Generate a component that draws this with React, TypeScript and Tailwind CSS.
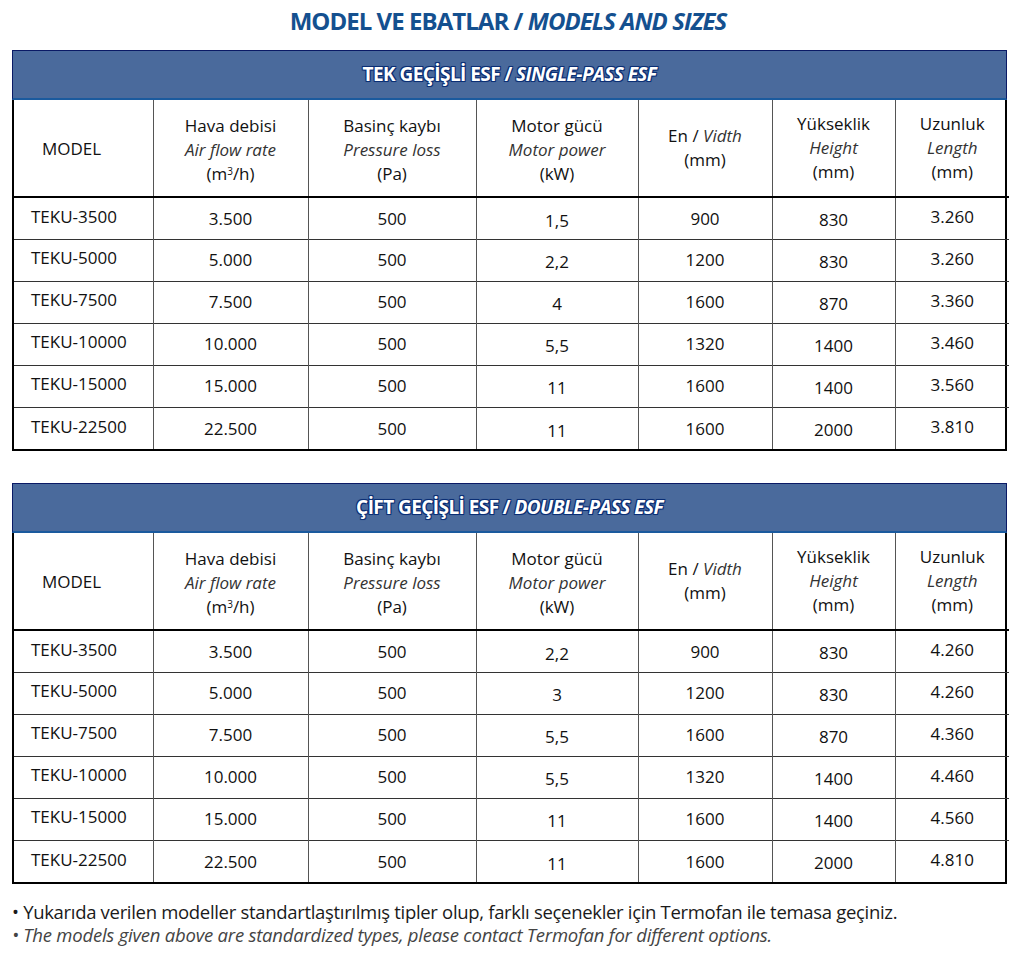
import React from 'react';

type Row = [string, string, string, string, string, string, string];

const singlePass: Row[] = [
  ['TEKU-3500', '3.500', '500', '1,5', '900', '830', '3.260'],
  ['TEKU-5000', '5.000', '500', '2,2', '1200', '830', '3.260'],
  ['TEKU-7500', '7.500', '500', '4', '1600', '870', '3.360'],
  ['TEKU-10000', '10.000', '500', '5,5', '1320', '1400', '3.460'],
  ['TEKU-15000', '15.000', '500', '11', '1600', '1400', '3.560'],
  ['TEKU-22500', '22.500', '500', '11', '1600', '2000', '3.810'],
];

const doublePass: Row[] = [
  ['TEKU-3500', '3.500', '500', '2,2', '900', '830', '4.260'],
  ['TEKU-5000', '5.000', '500', '3', '1200', '830', '4.260'],
  ['TEKU-7500', '7.500', '500', '5,5', '1600', '870', '4.360'],
  ['TEKU-10000', '10.000', '500', '5,5', '1320', '1400', '4.460'],
  ['TEKU-15000', '15.000', '500', '11', '1600', '1400', '4.560'],
  ['TEKU-22500', '22.500', '500', '11', '1600', '2000', '4.810'],
];

const widths = ['w-[139px]', 'w-[155px]', 'w-[168px]', 'w-[162px]', 'w-[134px]', 'w-[123px]', 'w-[114px]'];

function HeaderCell({ tr, en, unit }: { tr: React.ReactNode; en?: string; unit?: React.ReactNode }) {
  return (
    <div className="flex flex-col items-center leading-[24px]">
      <span>{tr}</span>
      {en && <span className="italic text-[#333]">{en}</span>}
      {unit && <span>{unit}</span>}
    </div>
  );
}

function SizeTable({ title, subtitle, rows }: { title: string; subtitle: string; rows: Row[] }) {
  return (
    <div className="w-[995px] border-2 border-black">
      <div className="h-[50px] bg-[#4a6a9c] border-t border-[#0a1a66] border-b-2 border-b-[#1a5a9e] -mx-[2px] -mt-[2px] border-x border-x-[#0a1a66] flex items-center justify-center">
        <span className="text-white font-bold text-[19px] tracking-[-0.03em] [text-shadow:0_0_2px_#0b2f75,1px_1px_0_#0b2f75,-1px_-1px_0_#0b2f75,1px_-1px_0_#0b2f75,-1px_1px_0_#0b2f75]">
          {title} / <span className="italic">{subtitle}</span>
        </span>
      </div>
      <table className="w-full border-collapse table-fixed text-[17px] text-[#111]">
        <colgroup>
          {widths.map((w, i) => (
            <col key={i} className={w} />
          ))}
        </colgroup>
        <thead>
          <tr className="h-[97px] border-b-2 border-black">
            <th className="font-normal text-left pl-[28px] pt-[2px]">MODEL</th>
            <th className="font-normal border-l border-[#555] pt-[4px]">
              <HeaderCell tr="Hava debisi" en="Air flow rate" unit={<>(m<sup className="text-[10px]">3</sup>/h)</>} />
            </th>
            <th className="font-normal border-l border-[#555] pt-[4px]">
              <HeaderCell tr="Basinç kaybı" en="Pressure loss" unit="(Pa)" />
            </th>
            <th className="font-normal border-l border-[#555] pt-[4px]">
              <HeaderCell tr="Motor gücü" en="Motor power" unit="(kW)" />
            </th>
            <th className="font-normal border-l border-[#555]">
              <HeaderCell tr={<>En / <span className="italic text-[#333]">Vidth</span></>} unit="(mm)" />
            </th>
            <th className="font-normal border-l border-[#555]">
              <HeaderCell tr="Yükseklik" en="Height" unit="(mm)" />
            </th>
            <th className="font-normal border-l border-[#555]">
              <HeaderCell tr="Uzunluk" en="Length" unit="(mm)" />
            </th>
          </tr>
        </thead>
        <tbody>
          {rows.map((r, i) => (
            <tr key={r[0]} className={`h-[42px] ${i < rows.length - 1 ? 'border-b border-[#333]' : ''}`}>
              <td className="pl-[17px] pb-[4px]">{r[0]}</td>
              <td className="text-center border-l border-[#555]">{r[1]}</td>
              <td className="text-center border-l border-[#555]">{r[2]}</td>
              <td className="text-center border-l border-[#555] pt-[4px]">{r[3]}</td>
              <td className="text-center border-l border-[#555]">{r[4]}</td>
              <td className="text-center border-l border-[#555] pt-[3px]">{r[5]}</td>
              <td className="text-center border-l border-[#555] pb-[3px]">{r[6]}</td>
            </tr>
          ))}
        </tbody>
      </table>
    </div>
  );
}

export default function App() {
  return (
    <div className="w-[1024px] h-[955px] bg-white pl-[12px] font-['Open_Sans',sans-serif]">
      <h1 className="h-[50px] pt-[6px] text-center pr-[20px] text-[#14508f] font-bold text-[24px] tracking-[-0.04em] leading-[30px]">
        MODEL VE EBATLAR / <span className="italic">MODELS AND SIZES</span>
      </h1>
      <SizeTable title="TEK GEÇİŞLİ ESF" subtitle="SINGLE-PASS ESF" rows={singlePass} />
      <div className="h-[32px]" />
      <SizeTable title="ÇİFT GEÇİŞLİ ESF" subtitle="DOUBLE-PASS ESF" rows={doublePass} />
      <div className="pt-[16px] text-[18.5px] leading-[23px]">
        <p className="text-[#1a1a1a] tracking-[-0.017em]">• Yukarıda verilen modeller standartlaştırılmış tipler olup, farklı seçenekler için Termofan ile temasa geçiniz.</p>
        <p className="text-[#444] italic tracking-[-0.012em]">• The models given above are standardized types, please contact Termofan for different options.</p>
      </div>
    </div>
  );
}
